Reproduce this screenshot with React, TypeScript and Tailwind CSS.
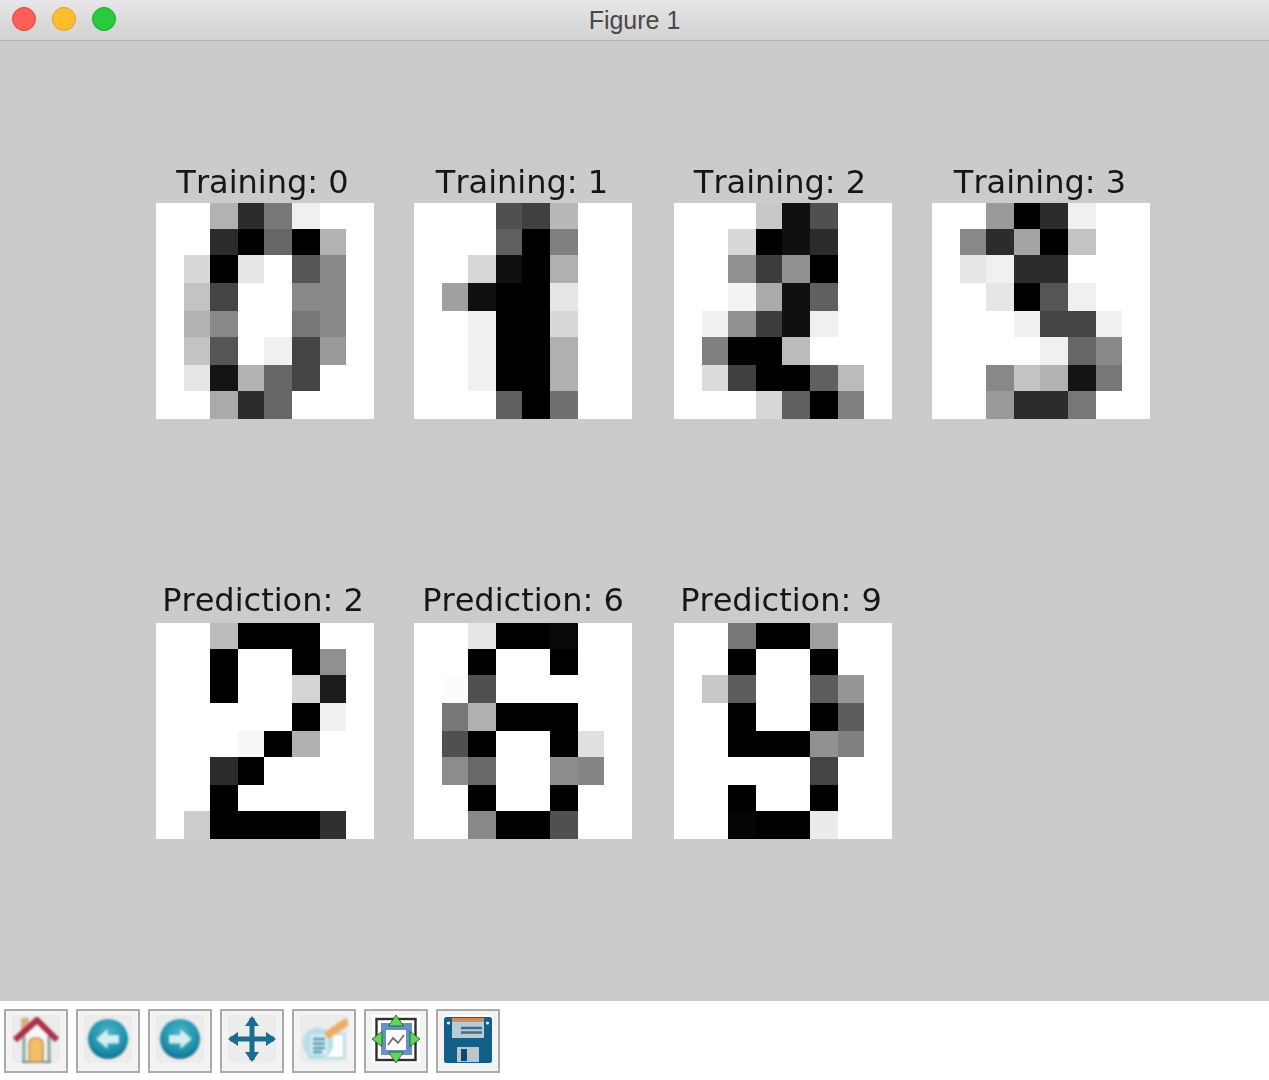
import React from 'react';

type Panel = { title: string; cells: number[][]; className?: string; titleClass?: string };

// grey levels read off the figure, 255 = white, 0 = black
const training: Panel[] = [
  {
    title: 'Training: 0',
    titleClass: 'pr-[5px] leading-[34px]',
    cells: [
      [255, 255, 178, 44, 120, 240, 255, 255],
      [255, 255, 44, 0, 102, 0, 178, 255],
      [255, 215, 0, 230, 255, 85, 136, 255],
      [255, 195, 68, 255, 255, 136, 136, 255],
      [255, 178, 136, 255, 255, 119, 136, 255],
      [255, 195, 85, 255, 240, 68, 153, 255],
      [255, 230, 20, 178, 102, 68, 255, 255],
      [255, 255, 170, 44, 102, 255, 255, 255],
    ],
  },
  {
    title: 'Training: 1',
    className: 'ml-[40px]',
    titleClass: 'pr-[2px] leading-[34px]',
    cells: [
      [255, 255, 255, 80, 64, 184, 255, 255],
      [255, 255, 255, 96, 0, 128, 255, 255],
      [255, 255, 215, 16, 0, 176, 255, 255],
      [255, 160, 16, 0, 0, 230, 255, 255],
      [255, 255, 240, 0, 0, 215, 255, 255],
      [255, 255, 240, 0, 0, 176, 255, 255],
      [255, 255, 240, 0, 0, 176, 255, 255],
      [255, 255, 255, 96, 0, 112, 255, 255],
    ],
  },
  {
    title: 'Training: 2',
    className: 'ml-[42px]',
    titleClass: 'pr-[6px] leading-[34px]',
    cells: [
      [255, 255, 255, 200, 16, 80, 255, 255],
      [255, 255, 215, 0, 16, 44, 255, 255],
      [255, 255, 144, 60, 144, 0, 255, 255],
      [255, 255, 243, 170, 16, 96, 255, 255],
      [255, 240, 144, 60, 16, 240, 255, 255],
      [255, 128, 0, 0, 187, 255, 255, 255],
      [255, 220, 64, 0, 0, 96, 187, 255],
      [255, 255, 255, 215, 96, 0, 128, 255],
    ],
  },
  {
    title: 'Training: 3',
    className: 'ml-[40px]',
    titleClass: 'pr-[2px] leading-[34px]',
    cells: [
      [255, 255, 153, 0, 44, 240, 255, 255],
      [255, 136, 44, 165, 0, 195, 255, 255],
      [255, 230, 240, 44, 44, 255, 255, 255],
      [255, 255, 230, 0, 85, 240, 255, 255],
      [255, 255, 255, 240, 68, 68, 240, 255],
      [255, 255, 255, 255, 240, 102, 136, 255],
      [255, 255, 136, 195, 178, 20, 119, 255],
      [255, 255, 153, 44, 44, 119, 255, 255],
    ],
  },
];

const predictions: Panel[] = [
  {
    title: 'Prediction: 2',
    titleClass: 'pr-[4px] leading-[30px]',
    cells: [
      [255, 255, 187, 0, 0, 0, 255, 255],
      [255, 255, 0, 255, 255, 0, 144, 255],
      [255, 255, 0, 255, 255, 212, 28, 255],
      [255, 255, 255, 255, 255, 0, 240, 255],
      [255, 255, 255, 247, 0, 176, 255, 255],
      [255, 255, 44, 0, 255, 255, 255, 255],
      [255, 255, 0, 255, 255, 255, 255, 255],
      [255, 204, 0, 0, 0, 0, 48, 255],
    ],
  },
  {
    title: 'Prediction: 6',
    className: 'ml-[40px]',
    titleClass: 'leading-[30px]',
    cells: [
      [255, 255, 230, 0, 0, 8, 255, 255],
      [255, 255, 0, 255, 255, 0, 255, 255],
      [255, 252, 80, 255, 255, 255, 255, 255],
      [255, 119, 176, 0, 0, 0, 255, 255],
      [255, 80, 0, 255, 255, 0, 224, 255],
      [255, 140, 104, 255, 255, 140, 132, 255],
      [255, 255, 0, 255, 255, 0, 255, 255],
      [255, 255, 136, 0, 0, 80, 255, 255],
    ],
  },
  {
    title: 'Prediction: 9',
    className: 'ml-[42px]',
    titleClass: 'pr-[4px] leading-[30px]',
    cells: [
      [255, 255, 119, 0, 0, 160, 255, 255],
      [255, 255, 0, 255, 255, 0, 255, 255],
      [255, 200, 92, 255, 255, 92, 150, 255],
      [255, 255, 0, 255, 255, 0, 92, 255],
      [255, 255, 0, 0, 0, 144, 128, 255],
      [255, 255, 255, 255, 255, 68, 255, 255],
      [255, 255, 0, 255, 255, 0, 255, 255],
      [255, 255, 5, 0, 0, 235, 255, 255],
    ],
  },
];

const DigitPanel: React.FC<Panel> = ({ title, cells, className, titleClass }) => (
  <div className={`w-[218px] shrink-0 ${className ?? ''}`}>
    <div className={`h-[38px] whitespace-nowrap text-center font-['DejaVu_Sans',sans-serif] text-[32px] text-[#161616] [font-kerning:none] blur-[0.4px] ${titleClass ?? ''}`}>
      {title}
    </div>
    <div className="grid h-[216px] w-[218px] grid-cols-[28px_26px_28px_26px_28px_28px_26px_28px] grid-rows-[26px_26px_28px_28px_26px_28px_26px_28px] blur-[0.3px]">
      {cells.flat().map((g, i) => (
        <div key={i} style={{ backgroundColor: `rgb(${g},${g},${g})` }} />
      ))}
    </div>
  </div>
);

const HomeIcon = () => (
  <svg viewBox="0 0 48 48" className="h-12 w-12 blur-[0.8px]">
    <rect x="10" y="4" width="6" height="13" fill="#e6b070" stroke="#b08a70" strokeWidth="1" />
    <path d="M24 7 L38 22 V47 H11 V22 Z" fill="#f7f7f5" />
    <path d="M12 21 V47 M37 21 V47" stroke="#86a2a4" strokeWidth="3" />
    <path d="M10 47 H39" stroke="#5f9296" strokeWidth="2" />
    <path d="M17 47 V29 Q17 23 24 23 Q31 23 31 29 V47 Z" fill="#f3c068" stroke="#bb8a5c" strokeWidth="1.5" />
    <path d="M3 25 L25 5 L45 25" fill="none" stroke="#ad3049" strokeWidth="6" strokeLinejoin="round" />
  </svg>
);

const RoundArrow = ({ flip }: { flip?: boolean }) => (
  <svg viewBox="0 0 48 48" className="h-12 w-12 blur-[0.8px]">
    <defs>
      <radialGradient id={flip ? 'ballF' : 'ballB'} cx="50%" cy="35%" r="65%">
        <stop offset="0%" stopColor="#4fb8ca" />
        <stop offset="70%" stopColor="#1f90aa" />
        <stop offset="100%" stopColor="#12738f" />
      </radialGradient>
    </defs>
    <circle cx="24" cy="24" r="20" fill={`url(#${flip ? 'ballF' : 'ballB'})`} />
    <path
      d={flip ? 'M36 24 L24.5 14 V20 H13 V28.5 H24.5 V34 Z' : 'M12 24 L23.5 14 V20 H35 V28.5 H23.5 V34 Z'}
      fill="#d4edf2"
    />
  </svg>
);

const MoveIcon = () => (
  <svg viewBox="0 0 48 48" className="h-12 w-12 blur-[0.7px]">
    <path d="M2 24 H46 M24 3 V45" stroke="#1b6c8e" strokeWidth="5" />
    <path d="M24 1 L31 11 H17 Z M24 47 L31 37 H17 Z M0 24 L10 17 V31 Z M48 24 L38 17 V31 Z" fill="#1b6c8e" />
  </svg>
);

const FigureOptionsIcon = () => (
  <svg viewBox="0 0 48 48" className="h-12 w-12 blur-[0.8px]">
    <rect x="9" y="19" width="35" height="24" fill="#ffffff" stroke="#a8dde6" strokeWidth="2" />
    <circle cx="18" cy="28" r="15.5" fill="#b8dfe8" />
    <rect x="10" y="19" width="18" height="21" fill="#dceff3" stroke="#a8dde6" strokeWidth="1" />
    <path d="M13 24 H25 M13 28.5 H25 M13 33 H25 M13 37 H22" stroke="#5096ae" strokeWidth="2.4" />
    <path d="M29 19 L45 8" stroke="#edac68" strokeWidth="8" strokeLinecap="round" />
  </svg>
);

const SubplotsIcon = () => (
  <svg viewBox="0 0 48 48" className="h-12 w-12 bg-white blur-[0.6px]">
    <rect x="4.5" y="4" width="39" height="41" fill="none" stroke="#303030" strokeWidth="2.4" />
    <rect x="9" y="8" width="31" height="32" fill="#6a90c8" />
    <rect x="14" y="15" width="20" height="20" fill="#ffffff" />
    <path d="M16 30 L21 23 L26 28 L32 20" fill="none" stroke="#707070" strokeWidth="1.8" />
    <path d="M24 0 L31.5 11 H16.5 Z M24 48 L31.5 37 H16.5 Z M0 24 L10 16.5 V31.5 Z M48 24 L38 16.5 V31.5 Z" fill="#62d458" stroke="#17581f" strokeWidth="0.8" />
  </svg>
);

const SaveIcon = () => (
  <svg viewBox="0 0 48 48" className="h-12 w-12 bg-white blur-[0.7px]">
    <rect x="0" y="2" width="48" height="46" rx="2.5" fill="#11608a" />
    <rect x="8" y="3" width="32" height="20" fill="#b9cbd6" />
    <rect x="8" y="3" width="32" height="4" fill="#cf8e5c" />
    <path d="M17 13 H38 M17 17.5 H38" stroke="#3f6d88" strokeWidth="2.4" />
    <rect x="13" y="32" width="22" height="15" fill="#b9c6cc" />
    <rect x="17" y="34" width="6" height="12" fill="#14466b" />
    <circle cx="4.5" cy="8" r="1.6" fill="#e8f0f4" />
    <circle cx="43.5" cy="8" r="1.6" fill="#e8f0f4" />
  </svg>
);

const tools = [
  <HomeIcon key="home" />,
  <RoundArrow key="back" />,
  <RoundArrow key="forward" flip />,
  <MoveIcon key="move" />,
  <FigureOptionsIcon key="options" />,
  <SubplotsIcon key="subplots" />,
  <SaveIcon key="save" />,
];

const App: React.FC = () => {
  return (
    <div className="flex h-[1080px] w-[1269px] flex-col overflow-hidden bg-white">
      {/* Title bar */}
      <div className="relative flex h-[41px] shrink-0 items-center justify-center border-b border-[#b2b2b2] bg-gradient-to-b from-[#e8e6e8] to-[#d2d2d2]">
        <div className="absolute left-3 top-[7px] flex gap-4">
          <span className="h-6 w-6 rounded-full border border-[#e2463f] bg-[#fc5f57]" />
          <span className="h-6 w-6 rounded-full border border-[#dfa023] bg-[#fdbd2e]" />
          <span className="h-6 w-6 rounded-full border border-[#1aab29] bg-[#2ac940]" />
        </div>
        <span className="font-['Liberation_Sans',sans-serif] text-[25px] leading-none text-[#4a484c]">Figure 1</span>
      </div>

      {/* Figure */}
      <div className="h-[960px] shrink-0 bg-[#cbcbcb] pl-[156px] pt-[124px]">
        <div className="flex">
          {training.map(p => (
            <DigitPanel key={p.title} {...p} />
          ))}
        </div>
        <div className="mt-[166px] flex">
          {predictions.map(p => (
            <DigitPanel key={p.title} {...p} />
          ))}
        </div>
      </div>

      {/* Toolbar */}
      <div className="flex flex-1 gap-2 bg-white pl-1 pt-2">
        {tools.map((icon, i) => (
          <div key={i} className="flex h-16 w-16 justify-center border-2 border-[#ababab] bg-[#f3f3f3] pt-1">
            <div className="h-12 w-12 bg-[#ececec]">{icon}</div>
          </div>
        ))}
      </div>
    </div>
  );
};

export default App;
